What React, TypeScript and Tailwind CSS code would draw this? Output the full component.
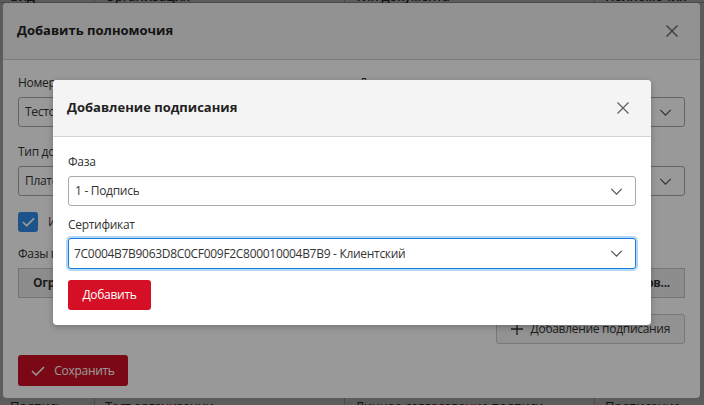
import React from "react";

function Chevron() {
  return (
    <svg viewBox="0 0 14 8" className="w-[13px] h-[7px] text-[#555]" fill="none" stroke="currentColor" strokeWidth={1.4}>
      <path d="M1 1l6 6 6-6" />
    </svg>
  );
}

function CloseIcon() {
  return (
    <svg viewBox="0 0 12 12" className="w-[12px] h-[12px] text-[#666]" fill="none" stroke="currentColor" strokeWidth={1.4}>
      <path d="M0.5 0.5l11 11M11.5 0.5l-11 11" />
    </svg>
  );
}

function Field({ label, value, chevron = true }: { label: string; value: string; chevron?: boolean }) {
  return (
    <div className="flex flex-col">
      <label className="text-[12px] leading-[17px] text-[#333] mb-[6px]">{label}</label>
      <div className="flex items-center justify-between h-[30px] rounded-[3px] border border-[#a9a9a9] bg-white pl-[6px] pr-[12px] text-[12px] text-[#333]">
        <span className="truncate">{value}</span>
        {chevron && <Chevron />}
      </div>
    </div>
  );
}

export default function App() {
  return (
    <div className="relative w-[704px] h-[405px] overflow-hidden bg-white font-['Open_Sans','Liberation_Sans',sans-serif] tracking-[-0.3px] text-[#333]">
      {/* page behind */}
      <div className="h-full flex flex-col justify-between text-[13px]">
        <div className="grid grid-cols-[95px_250px_250px_1fr] -mt-[13px] h-[16px] border-b border-[#ccc] font-semibold">
          <div className="pl-[10px] border-r border-[#ccc]">Вид</div>
          <div className="pl-[10px] border-r border-[#ccc]">Организация</div>
          <div className="pl-[10px] border-r border-[#ccc]">Тип документа</div>
          <div className="pl-[10px]">Полномочия</div>
        </div>
        <div className="grid grid-cols-[95px_250px_250px_1fr] -mb-[8px] h-[16px]">
          <div className="pl-[10px] border-r border-[#ccc]">Подпись</div>
          <div className="pl-[10px] border-r border-[#ccc]">Тест организации</div>
          <div className="pl-[10px] border-r border-[#ccc]">Личное согласование подписи</div>
          <div className="pl-[10px]">Подписание, Согласование</div>
        </div>
      </div>

      <div className="absolute inset-0 bg-black/40" />

      {/* outer modal */}
      <div className="absolute left-[3px] top-[3px] w-[697px] h-[395px] bg-white rounded-[4px] flex flex-col">
        <div className="h-[57px] shrink-0 flex items-center justify-between pl-[14px] pr-[22px] bg-[#f4f4f4] border-b border-[#ccc] rounded-t-[4px]">
          <h2 className="text-[13px] tracking-normal font-bold text-[#222]">Добавить полномочия</h2>
          <CloseIcon />
        </div>
        <div className="px-[15px] pt-[14px] flex flex-col">
          <div className="grid grid-cols-2 gap-x-[15px]">
            <Field label="Номер документа" value="Тестовый документ" chevron={false} />
            <Field label="Дата документа" value="01.01.2024" />
          </div>
          <div className="grid grid-cols-2 gap-x-[15px] mt-[16px]">
            <Field label="Тип документа" value="Платёжное поручение" chevron={false} />
            <Field label="Организация" value="Тест организации" />
          </div>
          <div className="flex items-center gap-[10px] mt-[16px]">
            <div className="w-[20px] h-[20px] rounded-[3px] bg-[#2f8be6] flex items-center justify-center">
              <svg viewBox="0 0 14 10" className="w-[13px] h-[10px]" fill="none" stroke="white" strokeWidth={1.8}>
                <path d="M1 5l4 4 8-8" />
              </svg>
            </div>
            <span className="text-[12px]">Использовать шаблон</span>
          </div>
          <div className="text-[12px] leading-[17px] mt-[13px]">Фазы подписания</div>
          <div className="grid grid-cols-[1fr_1fr] h-[30px] mt-[6px] border border-[#c4c4c4] bg-[#ebebeb] text-[12px] font-bold">
            <div className="pl-[14px] flex items-center">Ограничение</div>
            <div className="pr-[14px] flex items-center justify-end">Сертификатов...</div>
          </div>
          <div className="flex justify-end mt-[16px]">
            <button className="h-[30px] px-[14px] flex items-center gap-[8px] rounded-[3px] border border-[#c8c8c8] bg-[#f4f4f4] text-[12px] text-[#333]">
              <svg viewBox="0 0 12 12" className="w-[12px] h-[12px]" fill="none" stroke="#333" strokeWidth={1.3}>
                <path d="M6 0v12M0 6h12" />
              </svg>
              Добавление подписания
            </button>
          </div>
          <div className="mt-[11px]">
            <button className="h-[31px] w-[110px] flex items-center justify-center gap-[9px] rounded-[3px] bg-[#cc1024] text-white text-[12px]">
              <svg viewBox="0 0 14 10" className="w-[14px] h-[10px]" fill="none" stroke="white" strokeWidth={1.5}>
                <path d="M1 5l4 4 8-8" />
              </svg>
              Сохранить
            </button>
          </div>
        </div>
      </div>

      <div className="absolute inset-0 bg-black/40" />

      {/* inner modal */}
      <div className="absolute left-[53px] top-[80px] w-[598px] bg-white rounded-[4px] shadow-[0_2px_6px_rgba(0,0,0,0.25)]">
        <div className="h-[57px] flex items-center justify-between pl-[14px] pr-[22px] bg-[#f4f4f4] border-b border-[#d4d4d4] rounded-t-[4px]">
          <h3 className="text-[13px] tracking-normal font-bold text-[#222]">Добавление подписания</h3>
          <CloseIcon />
        </div>
        <div className="px-[15px] pt-[16px] pb-[15px] flex flex-col">
          <Field label="Фаза" value="1 - Подпись" />
          <div className="flex flex-col mt-[10px]">
            <label className="text-[12px] leading-[17px] text-[#333] mb-[5px]">Сертификат</label>
            <div className="flex items-center justify-between h-[31px] rounded-[3px] border border-[#1a7fd9] ring-2 ring-[#b5d8f7] bg-white pl-[5px] pr-[12px] text-[12px] text-[#333]">
              <span className="truncate">7C0004B7B9063D8C0CF009F2C800010004B7B9 - Клиентский</span>
              <Chevron />
            </div>
          </div>
          <div className="mt-[11px]">
            <button className="h-[30px] w-[83px] rounded-[3px] bg-[#d50f25] text-white text-[12px]">Добавить</button>
          </div>
        </div>
      </div>
    </div>
  );
}
